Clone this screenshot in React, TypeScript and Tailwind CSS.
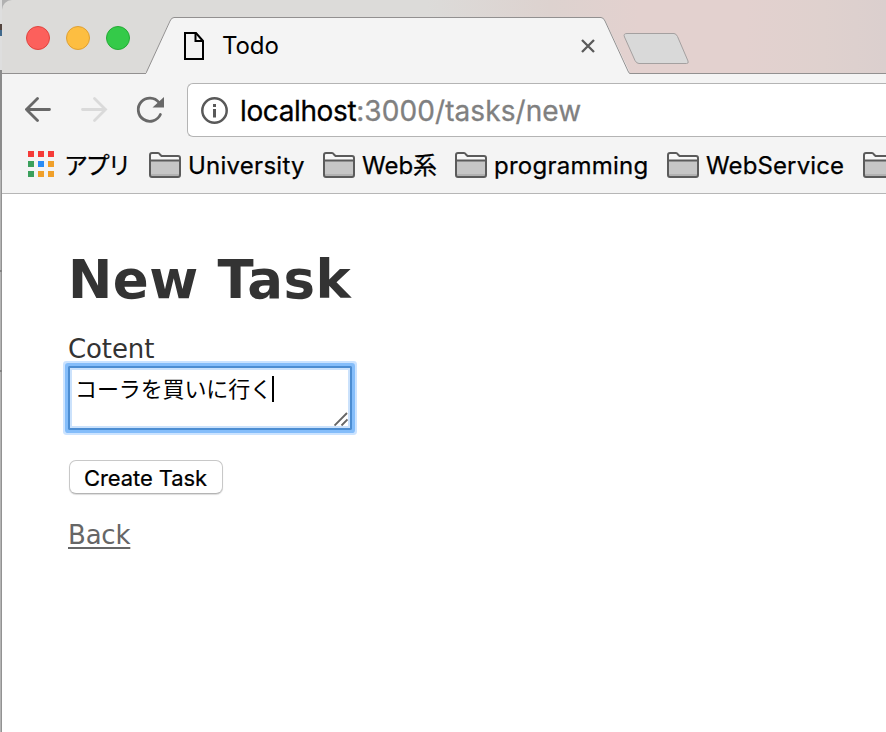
import React from "react";

const uiFont = "font-['Inter','Noto_Sans_CJK_JP',sans-serif]";
const pageFont = "font-['DejaVu_Sans','Noto_Sans_CJK_JP',sans-serif]";

function Lights() {
  return (
    <div className="mt-[26px] ml-6 flex gap-4">
      <div className="size-6 rounded-full border border-[#e0443f] bg-[#fc605c]" />
      <div className="size-6 rounded-full border border-[#dfa033] bg-[#fdbe41]" />
      <div className="size-6 rounded-full border border-[#24ab35] bg-[#34ca49]" />
    </div>
  );
}

function Tab() {
  return (
    <div className="relative ml-4 h-[74px] w-[484px]">
      <svg className="absolute inset-0" width="484" height="74" viewBox="0 0 484 74">
        <path d="M0 73.5 L23 22 Q25.5 17.5 28 17.5 H455 Q458 17.5 460 22 L483 71 L484 74 H0Z" fill="#f4f4f4" />
        <path d="M0 73 L1 71 L24 21 Q25.5 17.5 28 17.5 H455 Q457.500 17.5 459 21 L482 71 Q483 73.500 484 73.500" fill="none" stroke="#929090" />
      </svg>
      <div className="relative flex pl-[38px] pt-[31px]">
        <svg width="21" height="30" viewBox="0 0 21 30" fill="none" stroke="#000" strokeWidth="2">
          <path d="M1 2H12L19 10V28H1Z" />
          <path d="M11.500 2V10H19" />
        </svg>
        <div className="ml-[17px] w-[359px] whitespace-nowrap text-[24px] leading-[30px] tracking-[-0.1px] text-black">Todo</div>
        <svg className="mt-2" width="14" height="14" viewBox="0 0 14 14" stroke="#5a5a5a" strokeWidth="2.300">
          <path d="M1 1L13 13M13 1L1 13" />
        </svg>
      </div>
    </div>
  );
}

function Folder() {
  return (
    <svg className="shrink-0" width="32" height="26" viewBox="0 0 32 26">
      <path d="M1 23V3Q1 1 3 1H9Q10 1 11 2.500L12.500 4H29Q31 4 31 6V23Q31 25 29 25H3Q1 25 1 23Z" fill="#f8f8f8" />
      <path d="M1 9H31V24H1Z" fill="#c6c6c6" />
      <path d="M2 22H30V24H2Z" fill="#b2b2b2" />
      <path d="M1 23V3Q1 1 3 1H9Q10 1 11 2.500L12.500 4H29Q31 4 31 6V23Q31 25 29 25H3Q1 25 1 23ZM1 8.500H31" fill="none" stroke="#5b5b5b" strokeWidth="2" />
    </svg>
  );
}

function Bookmark({ label, box }: { label: string; box: string }) {
  return (
    <div className={`flex shrink-0 items-center ${box}`}>
      <Folder />
      <span className="ml-[7px] whitespace-nowrap pt-0.5">{label}</span>
    </div>
  );
}

function AppsIcon() {
  const colors = ["#f53b38", "#f53b38", "#f53b38", "#3ba05c", "#2a8cf5", "#f0a02a", "#3ba05c", "#f0a02a", "#f0a02a"];
  return (
    <div className="mb-1 grid shrink-0 grid-cols-[repeat(3,6px)] gap-1">
      {colors.map((c, i) => (
        <i key={i} className="block size-1.5" style={{ backgroundColor: c }} />
      ))}
    </div>
  );
}

function Toolbar() {
  return (
    <div className="flex h-[63px] items-center bg-[#f4f4f4] pt-[9px]">
      <svg className="ml-[23px] shrink-0" width="140" height="30" viewBox="25 95 140 30" fill="none" strokeWidth="2.800" strokeLinecap="round">
        <path d="M49.500 109.500H26.500M37.500 98.500L26.500 109.500L37.500 120.500" stroke="#686868" />
        <path d="M82.500 109.500H105.500M94.500 98.500L105.500 109.500L94.500 120.500" stroke="#dadada" />
        <path d="M160.400 114.500A11.600 11.600 0 1 1 159 102.500" stroke="#686868" />
        <path d="M164 97V107.500H152.500Z" fill="#686868" />
      </svg>
      <div className="ml-[22px] flex h-[54px] flex-1 items-center rounded-l-[6px] border border-r-0 border-[#b4b4b4] bg-white pl-[13px]">
        <svg className="shrink-0" width="27" height="27" viewBox="0 0 27 27">
          <circle cx="13.500" cy="13.500" r="12.200" fill="none" stroke="#595959" strokeWidth="2.500" />
          <path d="M12 7H15V10H12ZM12 12H15V20.500H12Z" fill="#595959" />
        </svg>
        <div className="ml-3 whitespace-nowrap pt-0.5 text-[28px] leading-[40px] tracking-[-0.050px] text-[#808080]">
          <span className="tracking-[-0.380px] text-black [-webkit-text-stroke:0.300px_black]">localhost</span><span className="tracking-[0.080px] [-webkit-text-stroke:0.300px_#808080]">:3000/tasks/new</span>
        </div>
      </div>
    </div>
  );
}

function Bookmarks() {
  return (
    <div className="flex h-[57px] items-center overflow-hidden border-b border-[#b6b6b6] bg-[#f4f4f4] pl-[26px] text-[24px] leading-[30px] text-black [-webkit-text-stroke:0.250px_black]">
      <div className="flex w-[121px] shrink-0 items-center pt-0.5">
        <AppsIcon />
        <span className="ml-[10px] whitespace-nowrap tracking-[-2.200px]">アプリ</span>
      </div>
      <Bookmark label="University" box="w-[174px] tracking-[0.250px]" />
      <Bookmark label="Web系" box="w-[132px]" />
      <Bookmark label="programming" box="w-[212px] tracking-[0.250px]" />
      <Bookmark label="WebService" box="w-[196px] tracking-[0.120px]" />
      <Folder />
    </div>
  );
}

function TaskForm() {
  return (
    <main className={`flex flex-1 flex-col items-start bg-white pl-[66px] pt-[51px] text-[#333] ${pageFont}`}>
      <h1 className="h-[70px] whitespace-nowrap text-[53px] font-bold leading-[70px] tracking-[0.450px]">New Task</h1>
      <label className="mt-[18px] h-8 whitespace-nowrap text-[26px] leading-8 tracking-[-0.100px]">Cotent</label>
      <div className="mt-px flex h-16 w-[284px] items-start rounded-[1px] bg-white pl-[7px] pt-2 shadow-[inset_0_0_0_2px_#4c8dd2,inset_0_0_0_4px_#cbe2fc,0_0_0_3px_#84bdfa,0_0_0_5px_#cbe3ff]">
        <span className="whitespace-nowrap text-[22px] leading-[32px] tracking-[-0.120px] text-black">コーラを買いに行く</span>
        <i className="mt-[2px] block h-[26px] w-0.5 bg-black" />
        <svg className="ml-auto mr-[4px] mt-[38px]" width="14" height="14" viewBox="0 0 14 14" stroke="#666" strokeWidth="1.900">
          <path d="M0.500 13.500L13 1M7.500 13.500L13.500 7.500" />
        </svg>
      </div>
      <button className={`mt-[30px] ml-px flex h-[34px] w-[154px] items-center justify-center whitespace-nowrap rounded-[7px] border border-[#c8c8c8] border-b-[#b4b4b4] bg-white pt-0.5 pr-px text-[22px] leading-[30px] tracking-[-0.100px] text-black shadow-[0_1px_1px_#dddddd] [-webkit-text-stroke:0.200px_black] ${uiFont}`}>
        Create Task
      </button>
      <a className="mt-6 h-9 whitespace-nowrap text-[26px] leading-[34px] tracking-[-0.200px] text-[#666] underline decoration-2 underline-offset-[3px]">Back</a>
    </main>
  );
}

export default function App() {
  return (
    <div className={`flex h-[732px] w-[886px] overflow-hidden bg-[#b1b1b1] ${uiFont}`}>
      <div className="flex w-0.5 shrink-0 flex-col bg-[linear-gradient(90deg,#b4b4b4_50%,#929292_50%)]">
        <div className="h-[70px] bg-[linear-gradient(#dedede_24px,#53443e_24px,#53443e_30px,#41698c_30px,#41698c_36px,#dedede_36px)]" />
        <div className="h-[100px] bg-[#8b8b8b]" />
        <div className="mt-[100px] h-0.5 bg-[#838383]" />
        <div className="mt-[98px] h-0.5 bg-[#838383]" />
      </div>
      <div className="flex min-w-0 flex-1 flex-col overflow-hidden rounded-tl-[10px]">
        <header className="flex h-[74px] shrink-0 border-b border-[#929090] bg-[linear-gradient(90deg,#dcdbd9_0%,#dcdbd9_48%,#ddd2cf_62%,#e3d1cf_72%,#e3d1cf_84%,#dfd1ce_93%,#dbcfce_100%)]">
          <Lights />
          <Tab />
          <svg className="-ml-2 mt-8 shrink-0" width="68" height="34" viewBox="622 32 68 34">
            <path d="M627 33.500H674Q676 33.500 677.500 36.500L688 61Q689 63.500 686.500 63.500H639Q636.500 63.500 635 60.500L624.500 37Q623 33.500 627 33.500Z" fill="#d9d9d9" stroke="#a4a0a0" />
          </svg>
        </header>
        <Toolbar />
        <Bookmarks />
        <TaskForm />
      </div>
    </div>
  );
}
